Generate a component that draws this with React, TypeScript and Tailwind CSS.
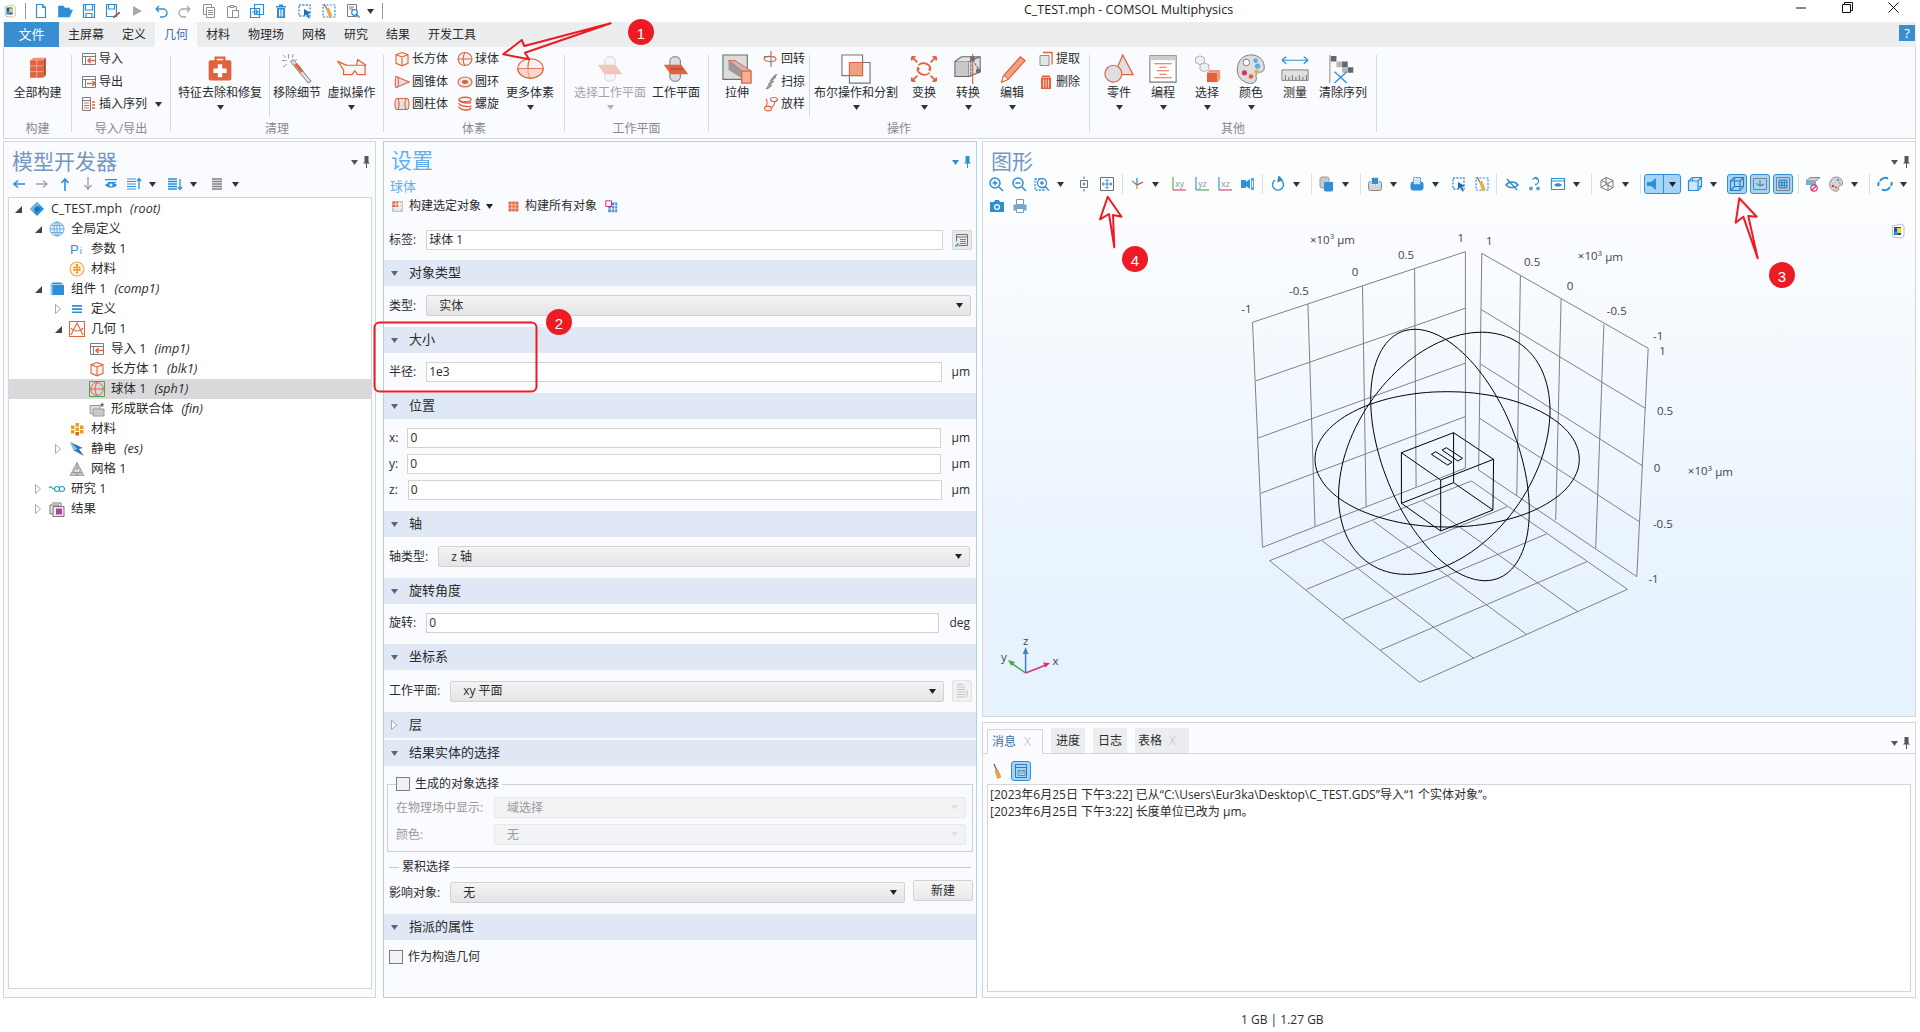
import React from 'react';

const O = '#e0623f';
const B = '#2f8fd6';

const Caret = ({ className = '' }: { className?: string }) => (
  <svg width="7" height="5" viewBox="0 0 7 5" className={className}>
    <path d="M0 0h7L3.5 5z" fill="currentColor" />
  </svg>
);

// small 16x16 icons used all over the ribbon, toolbars and tree
const small: Record<string, React.ReactNode> = {
  file: <path d="M3.5 1.5h6l3 3v10h-9zM9.5 1.5v3h3" fill="#fff" stroke={B} strokeWidth="1.2" />,
  folder: <path d="M1.5 14V3h5l1 2h5v2H5l-3.5 7 3-7h11l-3 7z" fill={B} stroke={B} strokeWidth=".6" />,
  save: <g fill="none" stroke={B} strokeWidth="1.2"><path d="M2.5 1.5h11v13h-11z" /><path d="M4.5 2v5h7V2M5 14.5v-4h6v4" /></g>,
  saveAs: <g fill="none" stroke={B} strokeWidth="1.2"><path d="M1.5 1.5h10v12h-10z" /><path d="M3.5 2v4h6V2" /><path d="M8 14l6-5 1 1-6 5z" fill={O} stroke="#555" strokeWidth=".6" /></g>,
  play: <path d="M4 3l9 5-9 5z" fill="#a9a9a9" />,
  undo: <path d="M3 6h7a3.5 3.5 0 0 1 0 8H7M3 6l3-3M3 6l3 3" fill="none" stroke={B} strokeWidth="1.4" />,
  redo: <path d="M13 6H6a3.5 3.5 0 0 0 0 8h3M13 6l-3-3M13 6l-3 3" fill="none" stroke="#a9a9a9" strokeWidth="1.3" />,
  copy: <g fill="#fff" stroke="#8c8f93"><path d="M2.5 1.5h8v10h-8z" /><path d="M5.5 4.5h8v10h-8zM7 7.5h5M7 9.5h5M7 11.5h5" /></g>,
  paste: <g fill="#fff" stroke="#8c8f93"><path d="M2.5 3.5h9v11h-9z" /><path d="M5 2.5h4v2H5zM7.5 7.5h6v7h-6z" /></g>,
  dup: <g fill="none" stroke={B} strokeWidth="1.2"><path d="M5.5 1.5h9v10h-9zM1.5 5.5h9v9h-9z" fill="#fff" /><path d="M3 9h6M6.5 6.5L9 9l-2.5 2.5" /></g>,
  trash: <g fill={B}><path d="M3 3h10v1.4H3zM6 1.5h4V3H6z" /><path d="M4 5h8v10H4z" /><path d="M6 6.5h.9v7H6zM7.6 6.5h.9v7h-.9zM9.2 6.5h.9v7h-.9z" fill="#fff" /></g>,
  selBox: <g><path d="M2 2h11v11H2z" fill="none" stroke={B} strokeDasharray="2 1.4" strokeWidth="1.3" /><path d="M7 6l7 4-3 1 2 4-1.5.6-2-4L7 13z" fill="#1f6fb0" /></g>,
  broom: <g><path d="M2 2h12v12H2z" fill="none" stroke={B} strokeDasharray="2 1.4" strokeWidth="1.2" /><path d="M3 1l3 5" stroke="#666" strokeWidth="1.2" /><path d="M5 6l3-1.5 3.5 9-3 2z" fill="#f0a746" /></g>,
  find: <g fill="none" stroke="#7a7a7a"><path d="M2.5 1.5h9v12h-9zM4 4h5M4 6h4" /><circle cx="9.5" cy="9.5" r="2.8" stroke={B} strokeWidth="1.3" fill="#fff" /><path d="M11.5 11.5l3 3" stroke={B} strokeWidth="1.6" /></g>,
  imp: <g><path d="M1.5 2.5h13v11h-13zM1.5 5.5h13M4.5 5.5v8" fill="#fff" stroke="#7d7d7d" /><path d="M14 9.5H7M9.5 7L7 9.5 9.5 12" fill="none" stroke={O} strokeWidth="1.5" /></g>,
  exp: <g><path d="M1.5 2.5h13v11h-13zM1.5 5.5h13M4.5 5.5v8" fill="#fff" stroke="#7d7d7d" /><path d="M6 9.5h8M11.5 7L14 9.5 11.5 12" fill="none" stroke={O} strokeWidth="1.5" /></g>,
  seq: <g><path d="M1.5 1.5h8v13h-8zM1.5 4.5h8" fill="#fff" stroke="#7d7d7d" /><path d="M3 7h5M3 9.5h5M3 12h5" stroke={O} /><path d="M11 6h3M11 9h3M11 12h3" stroke={O} strokeWidth="1.3" /></g>,
  box: <g fill="#fdf3ef" stroke={O} strokeWidth="1.1"><path d="M8 1.5l6 2.2v8.6L8 14.8l-6-2.5V3.7z" /><path d="M2 3.7L8 6l6-2.3M8 6v8.8" fill="none" /></g>,
  cone: <g stroke={O} strokeWidth="1.1"><path d="M2 2.500l13 5.500-13 5.500z" fill="#e2e2e2" /><ellipse cx="2.800" cy="8" rx="1.600" ry="5.500" fill="#e2e2e2" /></g>,
  cyl: <g stroke={O} strokeWidth="1.1" fill="#e2e2e2"><path d="M3 2.500h10v11H3z" /><ellipse cx="3" cy="8" rx="2" ry="5.500" /><ellipse cx="13" cy="8" rx="2" ry="5.500" /></g>,
  sph: <g fill="#f0f0f0" stroke={O} strokeWidth="1.1"><ellipse cx="8" cy="8" rx="7" ry="6.500" /><path d="M1 8h14M8 1.500c-2.500 3-2.500 10 0 13" fill="none" /></g>,
  torus: <g stroke={O} strokeWidth="1.1"><ellipse cx="8" cy="8" rx="7" ry="5" fill="#e8e8e8" /><ellipse cx="8" cy="8" rx="2.600" ry="1.400" fill="#e0623f" /></g>,
  helix: <g fill="none" stroke={O} strokeWidth="1.4"><ellipse cx="8" cy="3.500" rx="6" ry="2.200" /><path d="M2 3.500c-1 3 12 5 12 2.500M2 7c-1 3 12 5 12 2.500M2 10.500c-1 3 11 5.500 12 1" /></g>,
  rev: <g fill="none" stroke={O} strokeWidth="1.1"><path d="M8 0v16" stroke="#7a7a7a" /><ellipse cx="7" cy="8" rx="6" ry="2.600" /><path d="M1 5.500h6" stroke="#7a7a7a" /></g>,
  sweep: <g fill="#aaa" stroke="#777" strokeWidth=".7"><path d="M3 15l2-3 4-1-3 3zM5 11l2-3 4-1-3 3zM7 7l2-3 4-1-3 3zM10 3l2-2 2-1-2 3z" /></g>,
  loft: <g fill="none" stroke={O} strokeWidth="1.1"><ellipse cx="11" cy="3.500" rx="3.500" ry="2" /><ellipse cx="5" cy="12.500" rx="3.500" ry="2.400" fill="#eee" /><path d="M3 2.500c2 3 1 6 0 8M12 5.500c-1 3 -1 5-4 6.500" /></g>,
  extract: <g><path d="M2 4.500h9v10H2z" fill="#e4e4e4" stroke="#8c8f93" /><path d="M5 1.500h9v12" fill="none" stroke={O} strokeWidth="1.300" /></g>,
  del: <g fill={O}><path d="M4 1.500h8V3H4z" /><path d="M3 3.500h10V15H3z" /><path d="M5 5.500h1v8H5zM7.500 5.500h1v8h-1zM10 5.500h1v8h-1z" fill="#fbd6c6" /></g>,
  back: <path d="M14 8H3M7 4.500L3 8l4 3.500" fill="none" stroke={B} strokeWidth="1.600" />,
  fwd: <path d="M2 8h11M9 4.500L13 8l-4 3.500" fill="none" stroke="#a5a8ac" strokeWidth="1.500" />,
  up: <path d="M8 15V3M4.500 7L8 3l3.500 4" fill="none" stroke={B} strokeWidth="1.600" />,
  down: <path d="M8 1v12M4.500 9L8 13l3.500-4" fill="none" stroke="#a5a8ac" strokeWidth="1.500" />,
  showEye: <g fill={B}><path d="M2 3h12v1.300H2zM5 6h8v1H5z" /><path d="M2 9c3-3 9-3 12 0-3 3.500-9 3.500-12 0z" /><circle cx="8" cy="9" r="1.500" fill="#fff" /></g>,
  listUp: <g stroke={B}><path d="M1 3h9M1 5.500h9M1 8h9M1 10.500h9M1 13h9" /><path d="M13 13V3M11 5l2-2.500L15 5" fill="none" strokeWidth="1.300" /></g>,
  listDn: <g stroke={B} strokeWidth="1.300"><path d="M1 3h9M1 5.500h9M1 8h9M1 10.500h9M1 13h9" /><path d="M13 3v10M11 11l2 2.500 2-2.500" fill="none" /></g>,
  listGr: <g stroke="#7c8084" strokeWidth="1.300"><path d="M3 3h10M3 5.500h10M3 8h10M3 10.500h10M3 13h10" /></g>,
  zoomIn: <g fill="none" stroke={B} strokeWidth="1.500"><circle cx="7" cy="7" r="5" /><path d="M11 11l4 4M4.500 7h5M7 4.500v5" /></g>,
  zoomOut: <g fill="none" stroke={B} strokeWidth="1.500"><circle cx="7" cy="7" r="5" /><path d="M11 11l4 4M4.500 7h5" /></g>,
  zoomBox: <g fill="none" stroke={B} strokeWidth="1.300"><path d="M1 3h9v11H1z" strokeDasharray="2 1.300" /><circle cx="8" cy="7" r="4.500" fill="#fff" /><path d="M11 10.500l4 4M6 7h4M8 5v4" /></g>,
  fit: <g fill="none" stroke="#6f6f6f"><path d="M4.500 4.500h7v7h-7z" /><path d="M6.500 8h3M8 6.500v3" /><path d="M8 .5v2.500M8 13v2.500" stroke={B} strokeWidth="1.200" /></g>,
  fitAll: <g fill="none" stroke="#6f6f6f"><path d="M1.500 1.500h13v13h-13z" /><path d="M3 8h10M3 8l2-1.500M3 8l2 1.500M13 8l-2-1.500M13 8l-2 1.500M8 3.500v9M8 3.500L6.500 5M8 3.500L9.500 5M8 12.500L6.500 11M8 12.500L9.500 11" stroke={B} /></g>,
  axes: <g fill="none" strokeWidth="1.300"><path d="M8 9V2" stroke={B} /><path d="M8 9l6-3" stroke="#d9336b" /><path d="M8 9L3 5" stroke="#4aa544" /><path d="M8 13V9" stroke="#b79a2f" /></g>,
  xy: <g><path d="M2 14h13" fill="none" stroke="#d9336b" strokeWidth="1.100" /><path d="M2 14V1" stroke="#4aa544" strokeWidth="1.100" /><text x="4.200" y="11" fontSize="8.500" fill="#8f8f8f">xy</text></g>,
  yz: <g><path d="M2 14h13" fill="none" stroke="#4aa544" strokeWidth="1.100" /><path d="M2 14V1" stroke={B} strokeWidth="1.100" /><text x="4.200" y="11" fontSize="8.500" fill="#8f8f8f">yz</text></g>,
  xz: <g><path d="M2 14h13" fill="none" stroke="#d9336b" strokeWidth="1.100" /><path d="M2 14V1" stroke={B} strokeWidth="1.100" /><text x="4.200" y="11" fontSize="8.500" fill="#8f8f8f">xz</text></g>,
  cam3: <g fill={B}><path d="M1 4h5v8H1z" /><path d="M6 6l4-3v10l-4-3z" /><path d="M11 2h3v12h-3z" fill="#5ea7e0" /><path d="M12 5h1v6h-1z" fill="#fff" /></g>,
  rotate: <g fill="none" stroke={B} strokeWidth="1.400"><path d="M11 4a5.500 5.500 0 1 1-6 0" /><path d="M9 .5l3 3.500-4 1.500z" fill={B} /></g>,
  cylB: <g><rect x="1" y="1" width="9" height="11" rx="2" fill="#c9c9c9" stroke="#9a9a9a" /><path d="M5 6h9v8a2 2 0 0 1-2 1.500H7A2 2 0 0 1 5 14z" fill={B} /></g>,
  selA: <g><rect x="1.500" y="5.500" width="13" height="9" rx="2" fill="#d5d5d5" stroke="#888" /><path d="M4.500 1.500h7v7h-7z" fill={B} stroke="#fff" strokeDasharray="1.500 1" /></g>,
  selC: <g><rect x="1.500" y="5.500" width="13" height="9" rx="3" fill={B} /><path d="M4.500 1.500h7v7h-7z" fill="#cfe4f6" stroke="#2f8fd6" strokeDasharray="1.500 1" /></g>,
  hide: <g fill="none" stroke={B} strokeWidth="1.400"><path d="M2 9c3-4 9-4 12 0-3 3.500-9 3.500-12 0z" /><path d="M3 3l10 11" /></g>,
  undoHide: <g><path d="M7 1.500a3.500 3.500 0 1 1 0 7M7 1.500L4.500 3.500M7 1.500l2 2" fill="none" stroke={B} strokeWidth="1.300" transform="translate(1 0)" /><circle cx="4" cy="12.500" r="2" fill="#6b9ec8" /><circle cx="11" cy="12.500" r="2" fill="#6b9ec8" /></g>,
  eyeWin: <g><path d="M1.500 2.500h13v11h-13zM1.500 5h13" fill="#fff" stroke={B} strokeWidth="1.200" /><path d="M4 9c2-2.500 6-2.500 8 0-2 2.300-6 2.300-8 0z" fill={B} /></g>,
  wire: <g fill="none" stroke="#777"><path d="M2 4.500l5-3 7 3v7l-5 3-7-3zM2 4.500l7 3v7M9 7.500l5-3M7 1.500v7M2 11.500l5-3 7 3" /></g>,
  speaker: <path d="M1 6h4l5-4v12l-5-4H1z" fill={B} />,
  boxB: <g fill="#cfe6f9" stroke={B} strokeWidth="1.200"><path d="M5.500 1.500h9v9h-9z" /><path d="M1.500 5h9.500v9.500H1.500z" /><path d="M1.500 5l4-3.500M11 5l3.500-3.500M11 14.500l3.500-4" fill="none" /></g>,
  boxOn: <g fill="none" stroke="#2c7bb8" strokeWidth="1.100"><path d="M5.500 1.500h9v9h-9z" /><path d="M1.500 5h9.500v9.500H1.500z" /><path d="M1.500 5l4-3.500M11 5l3.500-3.500M11 14.500l3.500-4M1.500 14.500l4-4" /></g>,
  axesOn: <g fill="none"><path d="M1.500 2.500h13v11h-13z" stroke="#7c8084" /><path d="M8 10V4" stroke={B} strokeWidth="1.200" /><path d="M8 10l4-2" stroke="#d9336b" strokeWidth="1.200" /><path d="M8 10L4.500 7.500" stroke="#4aa544" strokeWidth="1.200" /></g>,
  gridOn: <g fill="none"><path d="M1.500 1.500h13v13h-13z" stroke="#7c8084" /><path d="M4 4h8v8H4zM4 6.700h8M4 9.300h8M6.700 4v8M9.300 4v8" stroke="#2c7bb8" /></g>,
  noSel: <g><path d="M1 5l4-3.500h10L11 5z" fill="#cfcfcf" stroke="#8a8a8a" /><path d="M1 5h10v4H1z" fill="#6fb1e4" /><circle cx="9" cy="12" r="3.200" fill="#fff" stroke="#d9336b" strokeWidth="1.200" /><path d="M7 14l4-4" stroke="#d9336b" strokeWidth="1.200" /></g>,
  palette: <g><path d="M8 1c4 0 7 3 6.500 7-.5 2-2.500 1-3.500 2s.5 2-.5 4c-1 1.500-3 1.500-5 .5C2 13 1 9.500 2 6c1-3 3.500-5 6-5z" fill="#d8d8d8" stroke="#777" strokeWidth=".8" /><circle cx="5.500" cy="5.500" r="1.500" fill="#fff" stroke="#777" strokeWidth=".5" /><circle cx="10" cy="4" r="1.300" fill="#4aa0e0" /><circle cx="11.500" cy="7" r="1.300" fill="#f0a746" /><circle cx="5" cy="10" r="1.300" fill="#d9336b" /><circle cx="8" cy="11.500" r="1.200" fill={O} /></g>,
  refresh: <g fill="none" stroke={B} strokeWidth="2"><path d="M3 5a6 6 0 0 1 8-2.500" /><path d="M13 11a6 6 0 0 1-8 2.500" /><path d="M1.500 10A6 6 0 0 1 2 6" /><path d="M14.500 6a6 6 0 0 1-.5 4" /></g>,
  camera: <g fill={B}><path d="M1 4h4l1-2h4l1 2h4v10H1z" /><circle cx="8" cy="9" r="3" fill="#fff" /><circle cx="8" cy="9" r="1.800" /></g>,
  printer: <g><path d="M4.500 1.500h7v5h-7z" fill="#fff" stroke="#7d98ad" /><path d="M1.500 6.500h13v6h-13z" fill="#6fa9d6" /><path d="M4.500 10.500h7v4h-7z" fill="#fff" stroke="#7d98ad" /></g>,
  broom3: <g><path d="M4 1l3 7" stroke="#666" strokeWidth="1.300" /><path d="M5 8l3-1 3 7-3.500 1.500z" fill="#f0a746" stroke="#c47e23" strokeWidth=".5" /></g>,
  win: <g fill="none" stroke="#2c7bb8"><path d="M2.500 1.500h11v13h-11zM2.500 4.500h11" /><path d="M5 7.500h7v5H5zM5 7.500l3.500 3 3.500-3" stroke="#6f8ea5" /></g>,
  app: <g><path d="M2 3l10-2 2 2v10l-3 2-8-1z" fill="#fff" stroke="#b9bec4" /><rect x="4" y="4" width="7" height="8" fill="#1d4fa3" /><rect x="7" y="5" width="4" height="5" fill="#f2d13a" /><rect x="4.500" y="8.500" width="3" height="3" fill="#28a8c9" /></g>,
  pi: <text x="1" y="13" fontSize="13" fill={B} fontFamily="Liberation Sans">P<tspan fontSize="9" dx="1">i</tspan></text>,
  matRound: <g><circle cx="8" cy="8" r="7" fill="#fff5e4" stroke="#f0a746" strokeWidth="1.100" /><path d="M4.500 5.500h2v2h-2zM7 5.500h2v2H7zM9.500 5.500h2v2h-2zM4.500 8h2v2h-2zM7 8h2v2H7zM9.500 8h2v2h-2zM7 3h2v2H7zM7 10.500h2v2H7z" fill="#e98f1d" /></g>,
  root: <g><path d="M8 1l7 7-7 7-7-7z" fill={B} /><path d="M8 1L1 8l3 3 7-7z" fill="#6db3ea" /><path d="M5 8l3-3 3 3-3 3z" fill="#1f6fb0" /></g>,
  globe: <g fill="none" stroke="#5ea7e0" strokeWidth=".9"><circle cx="8" cy="8" r="7" fill="#e7f2fc" /><ellipse cx="8" cy="8" rx="3" ry="7" /><path d="M1 8h14M2 4.500h12M2 11.500h12M8 1v14" /></g>,
  comp: <g><path d="M3 1.500h9l3 2.500v10H3z" fill={B} /><path d="M1.500 3l2 -1.500v13l-2-1z" fill="#9cc9ec" /><path d="M3.500 3.500H15" stroke="#fff" strokeWidth=".6" /></g>,
  lines: <g fill={B}><path d="M3 4h10v1.700H3zM3 7.200h10v1.700H3zM3 10.400h10v1.700H3z" /></g>,
  geom: <g fill="#fff" stroke={O} strokeWidth="1.100"><path d="M.5.5h15v15H.5z" /><path d="M2 14L8 2l6 12M2 7c3 4 9 4 12 0" fill="none" /></g>,
  sphSel: <g fill="none"><path d="M.5.5h15v15H.5z" stroke="#4aa544" /><circle cx="8" cy="8" r="6.300" stroke={O} /><path d="M1.700 8h12.600M8 1.700c-2.500 3-2.500 10 0 12.600" stroke={O} /></g>,
  form: <g><path d="M1 4.500h10v8H1z" fill="#dcdcdc" stroke="#999" /><path d="M4 8h11v7H4z" fill="#c9c9c9" stroke="#999" /><path d="M13 1l.7 1.800L15.500 3l-1.400 1.100.5 1.800-1.600-1-1.600 1 .5-1.800L11 3l1.700-.2z" fill="#666" /></g>,
  mat: <g fill="#ef9a20"><path d="M2 4.500h3.500v3.500H2zM6.500 2h3.500v3.500H6.500zM11 4.500h3.500v3.500H11zM2 9h3.500v3.500H2zM6.500 6.500h3.500v3.500H6.500zM11 9h3.500v3.500H11z" /><path d="M6.500 11h3.500v3.500H6.500z" fill="#c96f14" /></g>,
  es: <g><path d="M1 1l13 6-4 1 5 7L4 9l4-1z" fill="#2f77b8" /><path d="M1 1l7 7-4 1z" fill="#8dbbe2" /></g>,
  mesh: <g fill="#c8c8c8" stroke="#888" strokeWidth=".7"><path d="M8 1.500L15 14.500H1zM4.500 8h7M8 1.500v13M4.500 8L8 14.500 11.500 8M3 11.500h10" /></g>,
  study: <g fill="none" stroke="#1fa3b8" strokeWidth="1.100"><path d="M0 7c2-3 3 1 5 1" /><circle cx="8" cy="8" r="2.500" /><circle cx="13" cy="8" r="2.500" /></g>,
  results: <g><path d="M1 4h9v9H1z" fill="#e7e7e7" stroke="#777" /><path d="M3 2h9v9" fill="none" stroke="#777" /><path d="M4 5.500h11v10H4z" fill="#ececec" stroke="#777" /><path d="M7 7.500h6v6H7z" fill="#b8409b" /></g>,
  buildSel: <g><path d="M2 2h12v12H2z" fill="#ddd" stroke="#aaa" /><path d="M2 2h7v7H2z" fill={O} /><path d="M2 5h12M2 9.500h12M6 2v12M10 2v12" stroke="#fff" /></g>,
  buildAll: <g><path d="M2 2h12v12H2z" fill={O} /><path d="M2 6h12M2 10h12M6 2v12M10 2v12" stroke="#fbd6c6" /></g>,
  buildUp: <g><path d="M4 3h11v12H4z" fill="#4d8fc9" /><path d="M4 7h11M4 11h11M8 3v12M12 3v12" stroke="#fff" /><path d="M1 1h7v7H1z" fill="#fff" stroke="#c0279a" strokeWidth="1.200" /></g>,
  labelBtn: <g fill="none" stroke="#666" strokeWidth=".9"><path d="M2.500 2.500h11v11h-9" /><path d="M2.500 2.500v7M2.500 5h11" /><path d="M6 7.500h6M6 9.500h6M6 11.500h6" stroke="#1aa386" /><path d="M1.500 14.500l3-3" stroke="#1aa386" strokeWidth="1.500" /></g>,
  sheetGray: <g fill="none" stroke="#c4c4c4"><path d="M3 1.500h6M3 4h8M3 6.500h8M3 9h8M3 11.500h8M3 14h8M13 7v7" /></g>,
};

const large: Record<string, React.ReactNode> = {
  all: <g><path d="M7 6l4-3h14l-3 3z" fill="#ef977a" /><path d="M22 6l3-3v20l-3 3z" fill="#b9492a" /><path d="M7 6h15v20H7z" fill={O} /><path d="M7 12.500h15M7 19h15M14.500 6v20" stroke="#f7c4b2" strokeWidth=".8" /></g>,
  kit: <g><path d="M11 7V3h10v4" fill="none" stroke={O} strokeWidth="2.500" /><rect x="3" y="6" width="26" height="23" rx="2" fill={O} /><path d="M13.500 10.500h5v5h5v5h-5v5h-5v-5h-5v-5h5z" fill="#fff" /></g>,
  wand: <g><path d="M9 8l3-2 19 23-3 2z" fill="#e2e2e2" stroke="#6f6f6f" /><path d="M13 11.500l3-2 7 8.500-3 2z" fill={O} /><path d="M7 0v5M0 7h5M1 14l4-3M1 1l3 3M12 0l-1 4M16 6l-3 1" stroke="#888" strokeWidth=".9" fill="none" /></g>,
  goggles: <g fill="none" stroke={O} strokeWidth="1.300"><path d="M1 8l6 9v5h9l3-4 3 4h8V12H10z" fill="#fdf5f1" /><path d="M10 12L1 8M21 12l1-6 9 6" /></g>,
  more: <g stroke={O} strokeWidth="1.300"><ellipse cx="16" cy="16" rx="15" ry="11.500" fill="#f1f1f1" /><path d="M1 16h30M16 4.500c-4 3-4 20 0 23" fill="none" /><path d="M1 16a15 11.500 0 0 0 30 0" fill="#f7c4b2" fillOpacity=".55" /></g>,
  planeGray: <g opacity=".35"><rect x="10" y="2" width="12" height="28" rx="5" fill="#eee" stroke="#888" /><path d="M2 11h20l8 11H10z" fill={O} /></g>,
  plane: <g><rect x="9" y="2" width="12" height="28" rx="5" fill="#ddd" stroke="#666" /><path d="M2 11h20l8 11H10z" fill={O} /><path d="M10 16h14" stroke="#a33" /></g>,
  extrude: <g><path d="M1 1h26v26H1z" fill="#dcdcdc" stroke="#6f6f6f" strokeWidth="1.200" /><path d="M7 7l21 13v10L7 17z" fill="#9a9a9a" /><path d="M21 18h10v13H21z" fill="#f5b094" stroke={O} strokeWidth="1.400" /><path d="M7 7h7l17 11H21z" fill="#bbb" stroke={O} strokeWidth="1" /></g>,
  bool: <g><path d="M1 1h22v22H1z" fill="#fff" stroke="#777" strokeWidth="1.200" /><path d="M9 9h22v22H9z" fill="none" stroke="#777" strokeWidth="1.200" /><path d="M9 9h14v14H9z" fill="#f0a07f" stroke={O} strokeWidth="1" /></g>,
  transform: <g fill="none" stroke={O} strokeWidth="1.800"><path d="M3 3l6 6M3 3h4M3 3v4M29 3l-6 6M29 3h-4M29 3v4M3 29l6-6M3 29h4M3 29v-4M29 29l-6-6M29 29h-4M29 29v-4" /><path d="M10 12a8 8 0 0 1 13 3" /><path d="M22 20a8 8 0 0 1-13-3" /><path d="M24 14l-1 5-3-3zM8 18l1-5 3 3z" fill={O} stroke="none" /></g>,
  convert: <g fill="none" stroke="#666" strokeWidth="1.100"><path d="M2 8h15v16H2z" fill="#c9c9c9" /><path d="M2 8l7-5h20l-12 5M17 8l12-5v16l-12 5" fill="#e2e2e2" /><path d="M19 3l10 16M19 3v21" strokeDasharray="3 1" /><path d="M21 0v32" stroke={O} strokeWidth="1.200" /><circle cx="21" cy="5" r="2" fill="#777" /><circle cx="27" cy="18" r="2" fill="#777" /></g>,
  pencil: <g><path d="M7 23L25 3l5 4-18 20-7 3z" fill="#f3a082" stroke={O} strokeWidth="1.300" /><path d="M7 23l5 4-7 3z" fill="#fff" stroke={O} /></g>,
  parts: <g stroke={O} strokeWidth="1.300" fill="#dfdfdf"><path d="M20 1L31 22H11z" /><circle cx="10" cy="21" r="9" /></g>,
  program: <g><path d="M1 1h30v30H1z" fill="#fff" stroke="#777" strokeWidth="1.200" /><path d="M1 1h30v5H1z" fill="#ccc" /><path d="M6 10h20M12 14h8M9 18h14M12 22h8M6 26h20" stroke={O} strokeWidth="1.100" /></g>,
  select: <g><path d="M3 3l5-2 5 2v6l-5 2-5-2z" fill="#f0f0f0" stroke="#aaa" /><path d="M8 11l5-2 5 2v6l-5 2-5-2z" fill="#eee" stroke="#aaa" /><path d="M16 20h12v11H16z" fill={O} /><path d="M16 20l3-3h12l-3 3zM28 20l3-3v11l-3 3z" fill="#f09a7c" /></g>,
  paletteL: <g><path d="M16 1c9 0 15 6 14 15-1 5-6 2-8 5s1 4-1 8c-3 3-7 3-11 1C3 27 0 20 2 12 4 5 9 1 16 1z" fill="#dedede" stroke="#777" /><circle cx="11" cy="9" r="3.500" fill="#fff" stroke="#777" /><circle cx="21" cy="7" r="2.500" fill="#5bb0ea" /><circle cx="23" cy="13" r="2.800" fill="#5bb0ea" /><circle cx="22" cy="19" r="2.500" fill="#f0a746" /><circle cx="9" cy="20" r="2.800" fill="#d9336b" /><circle cx="16" cy="24" r="2.500" fill={O} /></g>,
  measure: <g><path d="M1 6h30M1 6l5-4M1 6l5 4M31 6l-5-4M31 6l-5 4" fill="none" stroke={B} strokeWidth="1.400" /><path d="M1 17h30v12H1z" fill="#e0e0e0" stroke="#777" /><path d="M5 29v-6M9 29v-4M13 29v-6M17 29v-4M21 29v-6M25 29v-4M29 29v-6" stroke="#666" /></g>,
  clear: <g><path d="M2 1v30" stroke="#888" /><path d="M3 2h6v6H3zM15 8h6v6h-6zM21 14h6v6h-6z" fill="#666" /><path d="M9 8h6v6H9zM15 14h6v6h-6z" fill="#b8b8b8" /><path d="M7 19l13 12M20 19L7 31" stroke={B} strokeWidth="1.400" /></g>,
};

const Ic = ({ n, s = 16 }: { n: string; s?: number }) => (
  <svg width={s} height={s} viewBox="0 0 16 16" className="shrink-0">{small[n]}</svg>
);
const Lg = ({ n, s = 28 }: { n: string; s?: number }) => (
  <svg width={s} height={s} viewBox="0 0 32 32" className="shrink-0">{large[n]}</svg>
);

const Big = ({ n, label, w, s, arrow, gray }: { n: string; label: string; w: string; s?: number; arrow?: boolean; gray?: boolean }) => (
  <div className={`${w} flex flex-col items-center shrink-0`}>
    <div className="h-[33px] flex items-center justify-center mt-[5px]"><Lg n={n} s={s} /></div>
    <div className={`h-[16px] leading-[16px] whitespace-nowrap ${gray ? 'text-[#a5a5a5]' : ''}`}>{label}</div>
    {arrow && <Caret className={`mt-[4px] ${gray ? 'text-[#b5b5b5]' : 'text-[#333]'}`} />}
  </div>
);

const Sm = ({ n, label, arrow }: { n: string; label: string; arrow?: boolean }) => (
  <div className="h-[22.5px] flex items-center gap-[2px] whitespace-nowrap">
    <Ic n={n} />
    <span>{label}</span>
    {arrow && <Caret className="ml-[6px] text-[#333]" />}
  </div>
);

const Col = ({ className, children }: { className: string; children: React.ReactNode }) => (
  <div className={`${className} pt-[1px] shrink-0`}>{children}</div>
);

const Group = ({ label, w, children }: { label: string; w: string; children: React.ReactNode }) => (
  <div className={`${w} shrink-0 flex flex-col h-full`}>
    <div className="flex h-[74px]">{children}</div>
    <div className="h-[16px] leading-[16px] text-center text-[#8a8a8a]">{label}</div>
  </div>
);

const VLine = () => <div className="w-px h-[77px] mt-[8px] bg-[#d5d8de] shrink-0" />;
const InLine = () => <div className="w-px h-[62px] mt-[8px] bg-[#d5d8de] shrink-0" />;

const tabs = [['主屏幕', 'w-[54px]'], ['定义', 'w-[42px]'], ['几何', 'w-[42px]'], ['材料', 'w-[42px]'], ['物理场', 'w-[54px]'], ['网格', 'w-[42px]'], ['研究', 'w-[42px]'], ['结果', 'w-[42px]'], ['开发工具', 'w-[66px]']];

const qat = ['file', 'folder', 'save', 'saveAs', 'play', 'undo', 'redo', 'copy', 'paste', 'dup', 'trash', 'selBox', 'broom', 'find'];

const Bar = ({ items }: { items: string[] }) => (
  <div className="flex items-center h-[22px]">
    {items.map((it, i) =>
      it === '|' ? (
        <div key={i} className="w-[7px] flex justify-center"><div className="w-px h-[20px] bg-[#dadde2]" /></div>
      ) : it === 'v' ? (
        <div key={i} className="w-[14px] mr-[4.8px] flex justify-center"><Caret className="text-[#333]" /></div>
      ) : it === 'speaker' ? (
        <div key={i} className="w-[37px] h-[20px] mr-[3px] flex items-center bg-[#a5d4f9] border border-[#2f8fd6] rounded-[3px] pl-[1px]">
          <Ic n="speaker" />
          <div className="w-px h-full bg-[#2f8fd6] ml-[1px]" />
          <Caret className="ml-[5px] text-[#222]" />
        </div>
      ) : it.startsWith('on:') ? (
        <div key={i} className="w-[23px] flex justify-center">
          <div className="w-[20px] h-[20px] flex items-center justify-center bg-[#a5d4f9] border border-[#2f8fd6] rounded-[3px]"><Ic n={it.slice(3)} /></div>
        </div>
      ) : (
        <div key={i} className="w-[23px] flex justify-center"><Ic n={it} /></div>
      ),
    )}
  </div>
);

type Row = { l: number; arrow?: 'open' | 'closed'; n: string; t: string; i?: string; sel?: boolean };
const tree: Row[] = [
  { l: 0, arrow: 'open', n: 'root', t: 'C_TEST.mph', i: '(root)' },
  { l: 1, arrow: 'open', n: 'globe', t: '全局定义' },
  { l: 2, n: 'pi', t: '参数 1' },
  { l: 2, n: 'matRound', t: '材料' },
  { l: 1, arrow: 'open', n: 'comp', t: '组件 1', i: '(comp1)' },
  { l: 2, arrow: 'closed', n: 'lines', t: '定义' },
  { l: 2, arrow: 'open', n: 'geom', t: '几何 1' },
  { l: 3, n: 'imp', t: '导入 1', i: '(imp1)' },
  { l: 3, n: 'box', t: '长方体 1', i: '(blk1)' },
  { l: 3, n: 'sphSel', t: '球体 1', i: '(sph1)', sel: true },
  { l: 3, n: 'form', t: '形成联合体', i: '(fin)' },
  { l: 2, n: 'mat', t: '材料' },
  { l: 2, arrow: 'closed', n: 'es', t: '静电', i: '(es)' },
  { l: 2, n: 'mesh', t: '网格 1' },
  { l: 1, arrow: 'closed', n: 'study', t: '研究 1' },
  { l: 1, arrow: 'closed', n: 'results', t: '结果' },
];
const indent = ['pl-[3px]', 'pl-[23px]', 'pl-[43px]', 'pl-[63px]'];

const PanelTitle = ({ children, color }: { children: React.ReactNode; color: string }) => (
  <div className={`text-[21px] leading-[28px] ${color}`}>{children}</div>
);

const PinMenu = ({ active }: { active?: boolean }) => (
  <div className={`absolute right-[5px] top-[14px] flex items-center gap-[5px] ${active ? 'text-[#2f8fd6]' : 'text-[#555]'}`}>
    <Caret />
    <svg width="7" height="12" viewBox="0 0 7 12"><path d="M1.500 0h4v6l1.500 1.500H0L1.500 6zM3 7.500h1V12H3z" fill="currentColor" /></svg>
  </div>
);

const Section = ({ t, mt, closed }: { t: string; mt: string; closed?: boolean }) => (
  <div className={`${mt} h-[26px] bg-[#dfe8f4] flex items-center pl-[5px] text-[13px]`}>
    <div className="w-[10px] flex justify-center">
      {closed ? (
        <svg width="7" height="10" viewBox="0 0 7 10"><path d="M.5.500L6 5 .5 9.500z" fill="#fff" stroke="#a5a8ac" /></svg>
      ) : (
        <Caret className="w-[9px] text-[#5c6670]" />
      )}
    </div>
    <span className="ml-[10px]">{t}</span>
  </div>
);

const Input = ({ v, className }: { v: string; className: string }) => (
  <div className={`${className} h-[20px] bg-white border border-[#d3d3d3] pl-[2px] leading-[17px] shrink-0`}>{v}</div>
);

const Select = ({ v, className, pale }: { v: string; className: string; pale?: boolean }) => (
  <div className={`${className} h-[21px] shrink-0 rounded-[2px] border flex items-center pl-[12px] pr-[7px] justify-between ${pale ? 'bg-[#f2f3f4] border-[#e8e8e8] text-[#9a9a9a]' : 'bg-linear-to-b from-[#f3f3f3] to-[#e5e5e5] border-[#d2d2d2]'}`}>
    <span>{v}</span>
    <Caret className={pale ? 'text-[#e2e2e2]' : 'text-[#222]'} />
  </div>
);

const Field = ({ mt, label, children }: { mt: string; label: string; children: React.ReactNode }) => (
  <div className={`${mt} flex items-center pl-[5px]`}>
    <span className="shrink-0 whitespace-nowrap">{label}</span>
    {children}
  </div>
);

const Unit = ({ t }: { t: string }) => <span className="absolute right-[6px] text-[12px]">{t}</span>;

// helpers for the plot: the coordinates below are read off a crop, mapped to page pixels
const px = (x: number) => 1200 + x / 2.8;
const py = (y: number) => 220 + y / 3;
const seg = (...p: number[]) => {
  let d = '';
  for (let i = 0; i < p.length; i += 2) d += `${i ? 'L' : 'M'}${px(p[i]).toFixed(1)} ${py(p[i + 1]).toFixed(1)}`;
  return d;
};
const ell = (cx: number, cy: number, a: number, b: number, d: number) => {
  const pts: number[] = [];
  for (let i = 0; i <= 120; i++) {
    const t = (i / 120) * Math.PI * 2;
    pts.push(cx + a * Math.cos(t), cy + b * Math.cos(t) + d * Math.sin(t));
  }
  return seg(...pts);
};

const gridLines = [
  [147, 307, 175, 982], [302, 252, 322, 918], [455, 198, 465, 860], [601, 147, 605, 800], [743, 95, 743, 745],
  [147, 307, 743, 95], [155, 483, 742, 265], [163, 654, 742, 430], [170, 820, 742, 590], [175, 982, 742, 745],
  [789, 100, 1255, 385], [786, 268, 1247, 565], [785, 432, 1240, 738], [783, 595, 1230, 905], [780, 750, 1223, 1070],
  [789, 100, 780, 750], [897, 167, 887, 825], [1011, 237, 996, 900], [1131, 313, 1108, 985], [1255, 385, 1223, 1070],
  [195, 1022, 615, 1387], [342, 962, 766, 1315], [485, 903, 914, 1243], [625, 843, 1058, 1175], [760, 783, 1197, 1108],
  [195, 1022, 760, 783], [298, 1108, 860, 860], [400, 1198, 970, 942], [505, 1290, 1083, 1025], [615, 1387, 1197, 1108],
];
const cube = [
  seg(564, 698, 710, 638, 822, 718, 674, 780, 564, 698),
  seg(564, 698, 564, 850, 674, 933, 820, 870, 822, 718),
  seg(674, 780, 674, 933),
  seg(710, 638, 710, 788, 564, 850),
  seg(710, 788, 820, 870),
  seg(648, 703, 660, 695, 706, 727, 693, 735, 648, 703),
  seg(678, 690, 690, 683, 735, 715, 722, 723, 678, 690),
];
const ticks: [string, number, number][] = [
  ['-1', 130, 266], ['-0.5', 277, 210], ['0', 434, 155], ['0.5', 577, 104], ['1', 730, 53],
  ['1', 810, 60], ['0.5', 930, 125], ['0', 1036, 197], ['-0.5', 1167, 272], ['-1', 1283, 347],
  ['1', 1295, 392], ['0.5', 1302, 572], ['0', 1280, 743], ['-0.5', 1296, 911], ['-1', 1270, 1076],
];
const units: [number, number][] = [[371, 57], [1121, 107], [1429, 752]];

const Plot = () => (
  <svg viewBox="983 142 932 574" className="absolute inset-0 w-full h-full">
    {gridLines.map((g, i) => <path key={i} d={seg(g[0], g[1], g[2], g[3])} stroke="#808080" strokeWidth="1" fill="none" />)}
    <g fill="none" stroke="#000" strokeWidth="1">
      <path d={ell(692, 718, 370, 0, 203)} />
      <path d={ell(684, 700, 296, -128, 340)} />
      <path d={ell(700, 705, 222, 167, 338)} />
      {cube.map((d, i) => <path key={i} d={d} />)}
    </g>
    <g fontSize="11.500" fill="#444" textAnchor="middle" dominantBaseline="central">
      {ticks.map((t, i) => <text key={i} x={px(t[1])} y={py(t[2])}>{t[0]}</text>)}
      {units.map((u, i) => (
        <text key={i} x={px(u[0])} y={py(u[1])}>×10<tspan fontSize="8" dy="-4">3</tspan><tspan dy="4" dx="3">µm</tspan></text>
      ))}
    </g>
    <g strokeWidth="1.500" fill="none">
      <path d="M1025.600 673V651" stroke="#3d7fc0" />
      <path d="M1025.600 673L1010.500 662.500" stroke="#4aa544" />
      <path d="M1025.600 673L1046 665" stroke="#d9336b" />
    </g>
    <path d="M1025.600 647l-2.800 7h5.600z" fill="#3d7fc0" />
    <path d="M1008 660l7 2-3.500 4z" fill="#4aa544" />
    <path d="M1050 663l-7 -.500 2.500 5z" fill="#d9336b" />
    <g fontSize="11.500" fill="#444" textAnchor="middle" dominantBaseline="central">
      <text x="1025.600" y="640.500">z</text>
      <text x="1004" y="656">y</text>
      <text x="1055.500" y="660.500">x</text>
    </g>
  </svg>
);

const Note = ({ x, y, n }: { x: number; y: number; n: string }) => (
  <g>
    <circle cx={x} cy={y} r="13" fill="#ed1c24" />
    <text x={x} y={y + 1} textAnchor="middle" dominantBaseline="central" fontSize="15" fill="#fff" fontFamily="Liberation Sans">{n}</text>
  </g>
);

const Marks = () => (
  <svg width="1920" height="1032" className="absolute left-0 top-0 pointer-events-none">
    <g fill="none" stroke="#ed1c24" strokeWidth="2" strokeLinejoin="round">
      <path d="M610.700 23.300L524.300 46 521.700 40 503.300 54.300 529 59.300 525 52.700z" />
      <rect x="374.500" y="322.500" width="162" height="69" rx="5" />
      <path d="M1739.300 198.300L1735.700 222.700 1743.300 216.700 1757.700 258.300 1748.300 216 1756.700 216.700z" />
      <path d="M1107.700 196.700L1100 219.300 1109 214 1114.300 247.300 1113 215 1121.500 216.700z" />
    </g>
    <Note x={641} y={32} n="1" />
    <Note x={559} y={322} n="2" />
    <Note x={1782} y={275} n="3" />
    <Note x={1135} y={259} n="4" />
  </svg>
);

export default function App() {
  return (
    <div className="relative w-[1920px] h-[1032px] overflow-hidden bg-white text-[12px] text-[#2b2b2b] font-['Open_Sans','Noto_Sans_CJK_SC',sans-serif]">
      {/* title bar */}
      <div className="relative h-[22px] flex items-center">
        <div className="ml-[3px] flex items-center"><Ic n="app" s={14} /></div>
        <div className="w-px h-[16px] bg-[#999] ml-[8px] mr-[3px]" />
        <div className="flex items-center">
          {qat.map((q, i) => (
            <div key={i} className="w-[24px] flex justify-center"><Ic n={q} /></div>
          ))}
          <Caret className="ml-[2px] text-[#333]" />
          <div className="w-px h-[16px] bg-[#999] ml-[8px]" />
        </div>
        <div className="absolute left-[1024px] top-[1px] text-[12.500px] text-[#222] whitespace-nowrap">C_TEST.mph - COMSOL Multiphysics</div>
        <div className="absolute right-[21px] top-[2px] flex items-center gap-[35px]">
          <svg width="11" height="11" viewBox="0 0 11 11"><path d="M0 6h10" stroke="#111" /></svg>
          <svg width="11" height="11" viewBox="0 0 11 11"><path d="M.5 2.500h8v8h-8zM2.500 2.500v-2h8v8h-2" fill="none" stroke="#111" /></svg>
          <svg width="11" height="11" viewBox="0 0 11 11"><path d="M.5.500l10 10M10.500.500l-10 10" stroke="#111" /></svg>
        </div>
      </div>

      {/* ribbon tabs */}
      <div className="ml-[3px] mr-[4px] h-[25px] bg-[#ecedef] flex items-center relative">
        <div className="ml-[1px] w-[55px] h-full bg-[#3a8dcf] text-white text-[13px] flex items-center justify-center">文件</div>
        {tabs.map(([t, w]) => (
          <div key={t} className={`${w} h-full flex items-center justify-center ${t === '几何' ? 'bg-[#fafbff] text-[#3a6ea5]' : ''}`}>{t}</div>
        ))}
        <div className="absolute right-[1px] top-[3px] w-[16px] h-[16px] bg-[#3a8dcf] text-white text-[13px] leading-[16px] text-center">?</div>
      </div>

      {/* ribbon */}
      <div className="ml-[3px] mr-[4px] h-[92px] bg-[#f9fbff] border-x border-b border-[#d0d3d8] flex">
        <Group label="构建" w="w-[67px]">
          <Big n="all" label="全部构建" w="w-[67px]" />
        </Group>
        <VLine />
        <Group label="导入/导出" w="w-[98px]">
          <Col className="pl-[9px]">
            <Sm n="imp" label="导入" />
            <Sm n="exp" label="导出" />
            <Sm n="seq" label="插入序列" arrow />
          </Col>
        </Group>
        <VLine />
        <Group label="清理" w="w-[212px]">
          <div className="w-[98px] shrink-0"><Big n="kit" label="特征去除和修复" w="w-[98px]" arrow /></div>
          <InLine />
          <Big n="wand" label="移除细节" w="w-[54px]" s={30} />
          <Big n="goggles" label="虚拟操作" w="w-[55px]" s={30} arrow />
        </Group>
        <VLine />
        <Group label="体素" w="w-[180px]">
          <Col className="pl-[10px] w-[73px]">
            <Sm n="box" label="长方体" />
            <Sm n="cone" label="圆锥体" />
            <Sm n="cyl" label="圆柱体" />
          </Col>
          <Col className="w-[49px]">
            <Sm n="sph" label="球体" />
            <Sm n="torus" label="圆环" />
            <Sm n="helix" label="螺旋" />
          </Col>
          <Big n="more" label="更多体素" w="w-[48px]" s={27} arrow />
        </Group>
        <VLine />
        <Group label="工作平面" w="w-[143px]">
          <div className="w-[5px]" />
          <Big n="planeGray" label="选择工作平面" w="w-[80px]" gray arrow />
          <Big n="plane" label="工作平面" w="w-[52px]" />
        </Group>
        <VLine />
        <Group label="操作" w="w-[380px]">
          <div className="w-[4px]" />
          <Big n="extrude" label="拉伸" w="w-[50px]" s={30} />
          <Col className="pl-[1px] w-[47px]">
            <Sm n="rev" label="回转" />
            <Sm n="sweep" label="扫掠" />
            <Sm n="loft" label="放样" />
          </Col>
          <InLine />
          <Big n="bool" label="布尔操作和分割" w="w-[92px]" s={30} arrow />
          <Big n="transform" label="变换" w="w-[44px]" s={30} arrow />
          <Big n="convert" label="转换" w="w-[44px]" s={30} arrow />
          <Big n="pencil" label="编辑" w="w-[44px]" s={30} arrow />
          <Col className="pl-[4px] w-[55px]">
            <Sm n="extract" label="提取" />
            <Sm n="del" label="删除" />
          </Col>
        </Group>
        <VLine />
        <Group label="其他" w="w-[286px]">
          <div className="w-[7px]" />
          <Big n="parts" label="零件" w="w-[44px]" s={30} arrow />
          <Big n="program" label="编程" w="w-[44px]" s={28} arrow />
          <Big n="select" label="选择" w="w-[44px]" s={28} arrow />
          <Big n="paletteL" label="颜色" w="w-[44px]" s={30} arrow />
          <Big n="measure" label="测量" w="w-[44px]" s={28} />
          <Big n="clear" label="清除序列" w="w-[52px]" s={30} />
        </Group>
        <VLine />
      </div>

      {/* panels */}
      <div className="mt-[2px] ml-[3px] h-[857px] flex">
        {/* model builder */}
        <div className="relative w-[373px] shrink-0 border border-[#d3d6db] bg-[#fafbff] flex flex-col">
          <PinMenu />
          <div className="pl-[8px] pt-[5px]"><PanelTitle color="text-[#7497c2]">模型开发器</PanelTitle></div>
          <div className="pl-[3px] -mt-[2px]">
            <Bar items={['back', 'fwd', 'up', 'down', 'showEye', 'listUp', 'v', 'listDn', 'v', 'listGr', 'v']} />
          </div>
          <div className="ml-[4px] mr-[3px] mt-[2px] mb-[8px] flex-1 border border-[#d3d6db] bg-white pt-[1px]">
            {tree.map((r, i) => (
              <div key={i} className={`h-[20px] flex items-center ${indent[r.l]} ${r.sel ? 'bg-[#d9d9db]' : ''}`}>
                <div className="w-[12px] flex justify-center shrink-0">
                  {r.arrow === 'open' && <svg width="7" height="7" viewBox="0 0 7 7"><path d="M7 0v7H0z" fill="#444" /></svg>}
                  {r.arrow === 'closed' && <svg width="6" height="10" viewBox="0 0 6 10"><path d="M.5.500L5.500 5 .5 9.500z" fill="#fff" stroke="#a5a8ac" /></svg>}
                </div>
                <div className="w-[20px] ml-[3px] flex justify-center shrink-0"><Ic n={r.n} /></div>
                <span className="ml-[4px] text-[12.500px] whitespace-nowrap">{r.t}</span>
                {r.i && <em className="ml-[8px] text-[12.500px] whitespace-nowrap">{r.i}</em>}
              </div>
            ))}
          </div>
        </div>

        {/* settings */}
        <div className="relative ml-[7px] w-[594px] shrink-0 border border-[#a8d3f2] bg-[#fafbff]">
          <PinMenu active />
          <div className="pl-[7px] pt-[4px] h-[35px]"><PanelTitle color="text-[#62b0ee]">设置</PanelTitle></div>
          <div className="h-[18px] pl-[6px] text-[13px] leading-[18px] text-[#5ab0f0]">球体</div>
          <div className="mt-[1px] h-[20px] flex items-center pl-[7px] whitespace-nowrap">
            <Ic n="buildSel" s={13} />
            <span className="ml-[5px]">构建选定对象</span>
            <Caret className="ml-[5px] text-[#222]" />
            <div className="ml-[14px]"><Ic n="buildAll" s={13} /></div>
            <span className="ml-[5px]">构建所有对象</span>
            <div className="ml-[8px]"><Ic n="buildUp" s={13} /></div>
          </div>

          <Field mt="mt-[14px]" label="标签:">
            <Input v="球体 1" className="ml-[10px] w-[517px]" />
            <div className="ml-[9px] w-[20px] h-[20px] bg-[#e9e9e9] border border-[#d5d5d5] rounded-[2px] flex items-center justify-center"><Ic n="labelBtn" /></div>
          </Field>
          <Section t="对象类型" mt="mt-[10px]" />
          <Field mt="mt-[9px]" label="类型:"><Select v="实体" className="ml-[10px] w-[545px]" /></Field>
          <Section t="大小" mt="mt-[11px]" />
          <Field mt="mt-[9px]" label="半径:"><Input v="1e3" className="ml-[10px] w-[516px]" /><Unit t="µm" /></Field>
          <Section t="位置" mt="mt-[11px]" />
          <Field mt="mt-[9px]" label="x:"><Input v="0" className="ml-[9px] w-[534px]" /><Unit t="µm" /></Field>
          <Field mt="mt-[6px]" label="y:"><Input v="0" className="ml-[9px] w-[534px]" /><Unit t="µm" /></Field>
          <Field mt="mt-[6px]" label="z:"><Input v="0" className="ml-[10px] w-[534px]" /><Unit t="µm" /></Field>
          <Section t="轴" mt="mt-[11px]" />
          <Field mt="mt-[9px]" label="轴类型:"><Select v="z 轴" className="ml-[10px] w-[532px]" /></Field>
          <Section t="旋转角度" mt="mt-[11px]" />
          <Field mt="mt-[9px]" label="旋转:"><Input v="0" className="ml-[10px] w-[513px]" /><Unit t="deg" /></Field>
          <Section t="坐标系" mt="mt-[11px]" />
          <Field mt="mt-[10px]" label="工作平面:">
            <Select v="xy 平面" className="ml-[10px] w-[494px]" />
            <div className="ml-[8px] w-[20px] h-[22px] bg-[#f1f1f1] border border-[#e3e3e3] rounded-[2px] flex items-center justify-center"><Ic n="sheetGray" /></div>
          </Field>
          <Section t="层" mt="mt-[10px]" closed />
          <Section t="结果实体的选择" mt="mt-[2px]" />

          <div className="relative mt-[18px] ml-[3px] mr-[3px] h-[68px] border border-[#cdd0d4] px-[8px] pt-[12px]">
            <div className="absolute left-[8px] -top-[10px] bg-[#fafbff] pr-[3px] flex items-center">
              <div className="w-[14px] h-[14px] bg-[#f2f2f2] border border-[#7d7d7d]" />
              <span className="ml-[5px]">生成的对象选择</span>
            </div>
            <div className="flex items-center text-[#9a9a9a]">
              <span className="w-[98px] shrink-0 whitespace-nowrap">在物理场中显示:</span>
              <Select v="域选择" className="w-[472px]" pale />
            </div>
            <div className="flex items-center text-[#9a9a9a] mt-[6px]">
              <span className="w-[98px] shrink-0">颜色:</span>
              <Select v="无" className="w-[472px]" pale />
            </div>
          </div>

          <div className="mt-[7px] h-[16px] flex items-center pl-[5px] pr-[5px]">
            <div className="w-[10px] h-px bg-[#c9cccf]" />
            <span className="mx-[3px]">累积选择</span>
            <div className="flex-1 h-px bg-[#c9cccf]" />
          </div>
          <div className="relative mt-[7px] flex items-center pl-[5px]">
            <span className="shrink-0">影响对象:</span>
            <Select v="无" className="ml-[10px] w-[455px]" />
            <div className="absolute right-[3px] -top-[2px] w-[60px] h-[21px] bg-linear-to-b from-[#f6f6f6] to-[#e9e9e9] border border-[#d2d2d2] rounded-[2px] text-center leading-[19px]">新建</div>
          </div>
          <Section t="指派的属性" mt="mt-[11px]" />
          <div className="mt-[8px] flex items-center pl-[5px]">
            <div className="w-[14px] h-[14px] bg-[#f2f2f2] border border-[#7d7d7d]" />
            <span className="ml-[5px]">作为构造几何</span>
          </div>
        </div>

        {/* graphics + messages */}
        <div className="ml-[5px] w-[934px] shrink-0 flex flex-col">
          <div className="relative h-[576px] border border-[#d3d6db] bg-linear-to-b from-[#fcfdff] from-10% to-[#e6f2fe] to-85%">
            <Plot />
            <PinMenu />
            <div className="relative pl-[8px] pt-[5px]"><PanelTitle color="text-[#7497c2]">图形</PanelTitle></div>
            <div className="relative pl-[2px] -mt-[2px]">
              <Bar items={['zoomIn', 'zoomOut', 'zoomBox', 'v', 'fit', 'fitAll', '|', 'axes', 'v', 'xy', 'yz', 'xz', 'cam3', '|', 'rotate', 'v', '|', 'cylB', 'v', '|', 'selA', 'v', 'selC', 'v', 'selBox', 'broom', '|', 'hide', 'undoHide', 'eyeWin', 'v', '|', 'wire', 'v', '|', 'speaker', 'boxB', 'v', 'on:boxOn', 'on:axesOn', 'on:gridOn', '|', 'noSel', 'palette', 'v', '|', 'refresh', 'v']} />
              <Bar items={['camera', 'printer']} />
            </div>
            <div className="absolute right-[9px] top-[81px]"><Ic n="app" /></div>
          </div>

          <div className="relative mt-[5px] flex-1 border border-[#d3d6db] bg-[#fbfcff] flex flex-col">
            <PinMenu />
            <div className="h-[31px] border-b border-[#d3d6db] flex items-end pl-[4px]">
              <div className="w-[56px] h-[25px] -mb-px bg-[#fbfcff] border border-b-0 border-[#d3d6db] flex items-center pl-[4px] text-[#3a6ea5]">消息<span className="ml-[8px] text-[#c8ccd2]">X</span></div>
              <div className="ml-[8px] w-[34px] h-[25px] bg-[#ecedef] flex items-center justify-center">进度</div>
              <div className="ml-[8px] w-[34px] h-[25px] bg-[#ecedef] flex items-center justify-center">日志</div>
              <div className="ml-[8px] w-[54px] h-[25px] bg-[#ecedef] flex items-center pl-[3px]">表格<span className="ml-[7px] text-[#c8ccd2]">X</span></div>
            </div>
            <div className="h-[30px] flex items-center pl-[7px] pt-[3px] gap-[5px]">
              <Ic n="broom3" />
              <div className="w-[20px] h-[20px] bg-[#a5d4f9] border border-[#2f8fd6] rounded-[3px] flex items-center justify-center"><Ic n="win" /></div>
            </div>
            <div className="mx-[4px] mb-[5px] flex-1 border border-[#d3d6db] bg-white px-[2px] pt-[1px] leading-[17px]">
              <div>[2023年6月25日 下午3:22] 已从“C:\Users\Eur3ka\Desktop\C_TEST.GDS”导入“1 个实体对象”。</div>
              <div>[2023年6月25日 下午3:22] 长度单位已改为 µm。</div>
            </div>
          </div>
        </div>
      </div>

      <div className="absolute left-[1241px] top-[1011px] whitespace-nowrap">1 GB | 1.27 GB</div>

      <Marks />
    </div>
  );
}
